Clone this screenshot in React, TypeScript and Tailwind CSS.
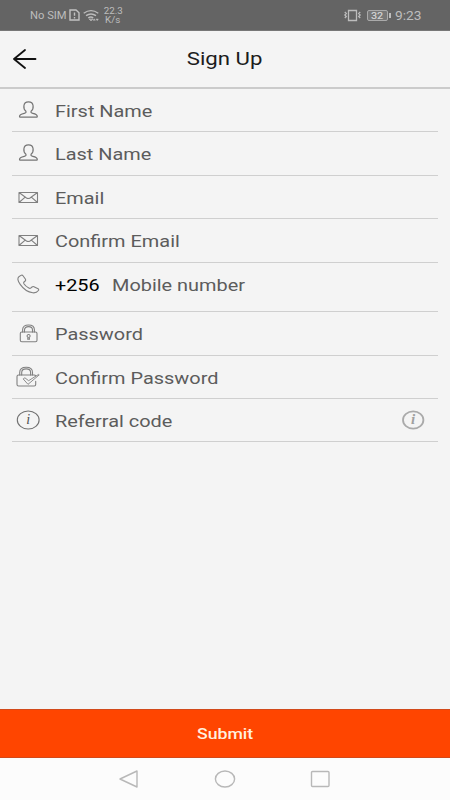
import type { ReactNode } from 'react';

const line = { fill: 'none', stroke: '#808080', strokeWidth: 1.1, strokeLinecap: 'round', strokeLinejoin: 'round' } as const;

function UserIcon() {
  return (
    <svg width="28" height="24" viewBox="0 0 28 24" {...line} stroke="#757575" strokeWidth={1.2}>
      <path d="M11.900 13.200C9.900 11.600 9.700 9.400 9.900 7.800 10.200 5.200 12 3.900 14.500 3.900s4.300 1.300 4.600 3.900c.2 1.600 0 3.800-2 5.400-.5 1.300.3 1.900 1.700 2.200 2.900.6 4.500 1.300 4.500 3.100 0 .4-.2.600-.6.600H6.100c-.4 0-.6-.2-.6-.6 0-1.800 1.800-2.500 4.700-3.100 1.400-.3 2.200-.9 1.700-2.200Z" />
    </svg>
  );
}

function MailIcon() {
  return (
    <svg width="28" height="24" viewBox="0 0 28 24" {...line}>
      <path d="M5 7.500H23.500V17.500H5ZM5 7.500l7.500 5.500q1.700 1.100 3.500 0l7.500-5.500M5 17.500l6.200-5.300M23.500 17.500l-6.200-5.300" />
    </svg>
  );
}

function PhoneIcon() {
  return (
    <svg width="28" height="24" viewBox="0 0 28 24" {...line}>
      <path d="M6.900 3.400 4.900 4.700C3.200 6.200 4 9.300 6.200 12.400c3 4.300 8 7.800 12.600 8.400 2.500.3 4.300-.5 5.600-2.300.5-.8.400-1.300-.3-1.700l-4.200-2.100c-.7-.3-1.300-.2-1.900.3l-1.300 1.100c-.6.400-1.200.3-1.900-.1-1.900-1-3.800-2.600-4.900-4.300-.4-.7-.4-1.200.1-1.700l1.200-1c.6-.5.700-1 .3-1.700L9 3.700c-.5-.7-1.300-.8-2.100-.3Z" />
    </svg>
  );
}

function LockIcon() {
  return (
    <svg width="28" height="24" viewBox="0 0 28 24" {...line}>
      <rect x="6.300" y="11" width="16.700" height="9.700" rx="1.500" />
      <path d="M8.600 11V8.800C8.600 5.700 11 4 14.500 4s5.900 1.700 5.900 4.800V11M10.500 11V9c0-2.200 1.600-3.400 4-3.400s4 1.200 4 3.400v2" />
      <path d="M14 16.300a1.500 1.500 0 1 1 1.200 0l.3 2h-1.800Z" />
    </svg>
  );
}

function LockCheckIcon() {
  return (
    <svg width="28" height="24" viewBox="0 0 28 24" {...line}>
      <path d="M21.600 10.800q-.4-.8-1.400-.8H4.600Q3 10 3 11.400v8.200Q3 21 4.600 21h15.600q1.500 0 1.500-1.400v-3.200" />
      <path d="M5.700 10V7.400C5.700 3.900 8.500 2.200 12.200 2.200s6.300 1.700 6.300 5.200V10M7.700 10V7.500c0-2.400 1.800-3.600 4.500-3.600s4.400 1.200 4.400 3.600V10" />
      <path strokeWidth=".9" d="m9.500 13.700 1.400-.9 3.700 2.900 10-6.300.6.500-10.900 9.200Z" />
    </svg>
  );
}

function InfoIcon({ bold = false }: { bold?: boolean }) {
  const color = bold ? '#aaa' : '#707070';
  return (
    <svg width="28" height="24" viewBox="0 0 28 24" fill="none">
      <ellipse cx="14.200" cy="12" rx={bold ? 10.2 : 10.9} ry={bold ? 8.6 : 9} stroke={color} strokeWidth={bold ? 1.8 : 1.1} />
      <text x="14.200" y="16.400" textAnchor="middle" fill={bold ? '#a0a0a0' : '#505050'} className={bold ? "font-['Liberation_Serif',serif] text-[15px] font-bold italic" : "font-['Liberation_Serif',serif] text-[14px] italic"}>i</text>
    </svg>
  );
}

function Row({ icon, height, children }: { icon: ReactNode; height: string; children: ReactNode }) {
  return (
    <div className={`flex items-start border-b border-[#cfcfcf] ${height}`}>
      <div className="mt-[9px] w-[42.500px] shrink-0 pl-[2px]">{icon}</div>
      <div className="flex h-[43px] flex-1 items-center">{children}</div>
    </div>
  );
}

function Label({ children }: { children: ReactNode }) {
  return (
    <span className="origin-left scale-x-[1.207] whitespace-nowrap pt-[2.500px] text-[16.500px] leading-none text-[#5c5c5c]">{children}</span>
  );
}

export default function App() {
  return (
    <div className="flex h-[800px] w-[450px] flex-col overflow-hidden bg-[#f4f4f4] font-['Roboto',sans-serif]">
      <div className="flex h-[31px] shrink-0 items-center border-b border-[#777] bg-[#646464] pl-[30px] text-[#bdbdbd]">
        <span className="w-[39px] origin-left scale-x-[1.120] whitespace-nowrap pt-[2px] text-[10px] leading-none">No SIM</span>
        <svg className="shrink-0" width="11" height="12" viewBox="0 0 11 12" fill="none" stroke="#c2c2c2" strokeWidth="1.400">
          <path d="M1 1h6l3 2.800V11H1ZM5.500 3.500v3.300M5.500 8v1.400" />
        </svg>
        <svg className="ml-[3px] shrink-0" width="17" height="13" viewBox="0 0 17 13" fill="none" stroke="#bdbdbd" strokeWidth="1.400">
          <path d="M.7 4.200q7.300-5.200 14.600 0M3 6.700q5-3.400 10 0M5.200 9q2.800-2 5 0" />
          <path d="m8 11.700-1.700-1.500h3.400Z" strokeWidth="1" />
          <path d="m10 11.300 1.200-1.500 1.200 1.500ZM13 10h2.400L14.200 11.700Z" fill="#bdbdbd" strokeWidth=".4" />
        </svg>
        <span className="ml-[4px] flex w-[18px] flex-col items-center pt-px text-[8.500px] leading-[9px]">
          <span className="scale-x-[1.150]">22.3</span>
          <span className="scale-x-[1.150]">K/s</span>
        </span>
        <svg className="ml-[222px] mt-px shrink-0" width="17" height="13" viewBox="0 0 17 13" fill="none" stroke="#bdbdbd" strokeWidth="1.300">
          <path d="M4.500 1.500h8v10h-8Z" />
          <path d="M.8 3l1.500 1.500L.8 6l1.500 1.500L.8 9M16.200 3l-1.500 1.500L16.200 6l-1.500 1.500L16.200 9" />
        </svg>
        <div className="ml-[6px] mt-px flex h-[11px] w-[21px] items-center justify-center rounded-[2px] border border-[#aaa] bg-[#777] pt-px text-[9px] font-medium leading-none text-[#d0d0d0]">
          <span className="scale-x-[1.200]">32</span>
        </div>
        <div className="ml-px mt-px h-[5px] w-[2px] bg-[#bdbdbd]" />
        <span className="ml-[4px] origin-left scale-x-[1.100] pt-[2px] text-[12.500px] leading-none">9:23</span>
      </div>
      <header className="flex h-[58px] shrink-0 items-center border-b-2 border-[#cbcbcb] pl-[13px]">
        <svg className="mb-px" width="24" height="20" viewBox="0 0 24 20" fill="none" stroke="#111" strokeWidth="1.800" strokeLinecap="round" strokeLinejoin="round">
          <path d="M22.500 10H1M12 1 1 10l11 9" />
        </svg>
        <div className="flex flex-1 justify-center pr-[37px]">
          <span className="scale-x-[1.200] pt-px text-[18.500px] leading-none text-[#1c1c1c]">Sign Up</span>
        </div>
      </header>
      <main className="flex-1 px-3">
        <Row icon={<UserIcon />} height="h-[43px]"><Label>First Name</Label></Row>
        <Row icon={<UserIcon />} height="h-[44px]"><Label>Last Name</Label></Row>
        <Row icon={<MailIcon />} height="h-[43px]"><Label>Email</Label></Row>
        <Row icon={<MailIcon />} height="h-[44px]"><Label>Confirm Email</Label></Row>
        <Row icon={<PhoneIcon />} height="h-[49px]">
          <span className="w-[57.500px] origin-left scale-x-[1.200] pt-[2.500px] text-[16.500px] leading-none text-black">+256</span>
          <Label>Mobile number</Label>
        </Row>
        <Row icon={<LockIcon />} height="h-[44px]"><Label>Password</Label></Row>
        <Row icon={<LockCheckIcon />} height="h-[43px]"><Label>Confirm Password</Label></Row>
        <Row icon={<InfoIcon />} height="h-[43px]">
          <Label>Referral code</Label>
          <span className="mb-px ml-auto mr-[11px]"><InfoIcon bold /></span>
        </Row>
      </main>
      <div className="flex h-[49px] shrink-0 items-center justify-center border-y border-[#d2491a] bg-[#ff4500] pt-[3px]">
        <span className="scale-x-[1.220] text-[14.500px] font-medium leading-none text-[#fff0df]">Submit</span>
      </div>
      <nav className="flex h-[42px] shrink-0 items-center justify-center bg-[#fcfcfc]">
        <svg width="214" height="20" viewBox="0 0 214 20" fill="none" stroke="#b8b8b8" strokeWidth="1.400" strokeLinejoin="round">
          <path d="M19 2v16L2 10Z" />
          <ellipse cx="107" cy="10" rx="9.600" ry="8" />
          <rect x="193.500" y="2.500" width="17.500" height="15" rx="1" />
        </svg>
      </nav>
    </div>
  );
}
